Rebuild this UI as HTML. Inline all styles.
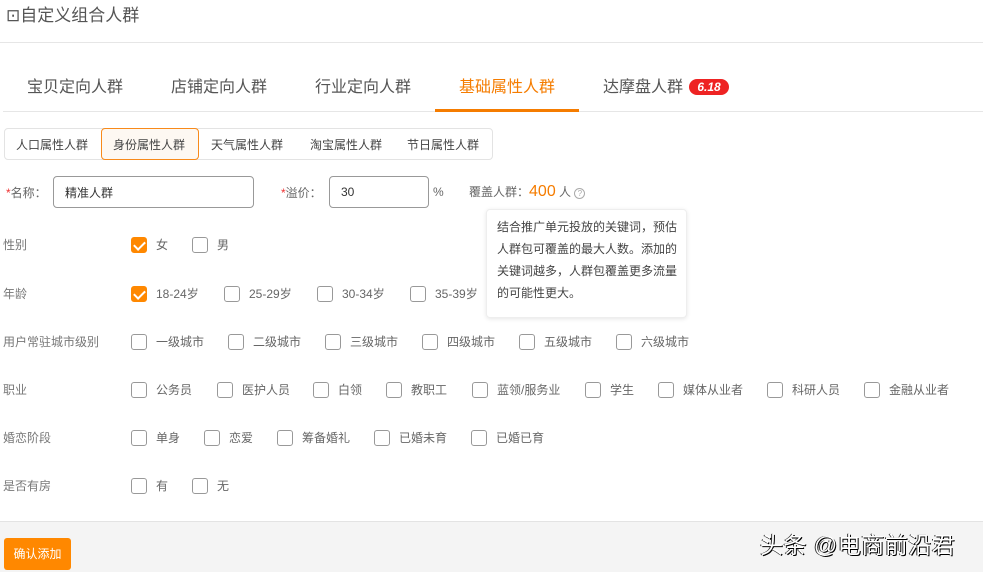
<!DOCTYPE html><html><head><meta charset="utf-8"><style>
*{margin:0;padding:0;box-sizing:border-box}
body{width:983px;height:572px;position:relative;overflow:hidden;background:#fff;font-family:"Liberation Sans","Noto Sans CJK SC",sans-serif;color:#666}
.a{position:absolute;white-space:nowrap}
.t{font-size:16px;color:#555;top:73px}
.s{font-size:12px;color:#444;top:136px}
.lb{font-size:12px;color:#777;left:3px}
.cb{position:absolute;width:16px;height:16px;border:1px solid #999;border-radius:3px;background:#fff}
.ck{background:#f80;border-color:#f80}
.ck::after{content:"";position:absolute;left:4px;top:1px;width:5px;height:9px;border:solid #fff;border-width:0 2px 2px 0;transform:rotate(45deg)}
.ct{font-size:12px;color:#666}
</style></head><body>
<div class="a" style="left:6px;top:1px;font-size:17px;color:#555">⊡自定义组合人群</div>
<div class="a" style="left:0;top:42px;width:983px;height:1px;background:#e6e6e6"></div>
<div class="a t" style="left:27px">宝贝定向人群</div>
<div class="a t" style="left:171px">店铺定向人群</div>
<div class="a t" style="left:315px">行业定向人群</div>
<div class="a t" style="left:459px;color:#f57c00">基础属性人群</div>
<div class="a t" style="left:603px">达摩盘人群</div>
<div class="a" style="left:689px;top:79px;width:40px;height:16px;border-radius:8px;background:#ee2323;color:#fff;font-size:12px;font-weight:bold;font-style:italic;text-align:center;line-height:16px">6.18</div>
<div class="a" style="left:3px;top:111px;width:980px;height:1px;background:#e6e6e6"></div>
<div class="a" style="left:435px;top:109px;width:144px;height:3px;background:#f57c00"></div>
<div class="a" style="left:4px;top:128px;width:489px;height:32px;border:1px solid #e3e3e3;border-radius:4px"></div>
<div class="a" style="left:101px;top:128px;width:98px;height:32px;border:1px solid #f88a1a;border-radius:4px;background:#fdf8f2"></div>
<div class="a s" style="left:16px">人口属性人群</div>
<div class="a s" style="left:113px">身份属性人群</div>
<div class="a s" style="left:211px">天气属性人群</div>
<div class="a s" style="left:310px">淘宝属性人群</div>
<div class="a s" style="left:407px">节日属性人群</div>
<div class="a" style="left:6px;top:184px;font-size:12px;color:#666"><span style="color:#e33">*</span>名称：</div>
<div class="a" style="left:53px;top:176px;width:201px;height:32px;border:1px solid #999;border-radius:4px;font-size:12px;color:#333;padding:7px 11px">精准人群</div>
<div class="a" style="left:281px;top:184px;font-size:12px;color:#666"><span style="color:#e33">*</span>溢价：</div>
<div class="a" style="left:329px;top:176px;width:100px;height:32px;border:1px solid #999;border-radius:4px;font-size:12px;color:#333;padding:8px 11px">30</div>
<div class="a" style="left:433px;top:185px;font-size:12px">%</div>
<div class="a" style="left:469px;top:183px;font-size:12px">覆盖人群：<span style="color:#f57c00;font-size:16px">400</span> 人 <span style="display:inline-block;width:11px;height:11px;border:1px solid #aaa;border-radius:50%;font-size:8px;text-align:center;line-height:10px;color:#aaa">?</span></div>
<div class="a" style="left:486px;top:209px;width:201px;height:109px;border:1px solid #eee;border-radius:4px;box-shadow:0 1px 4px rgba(0,0,0,.1);background:#fff;font-size:12px;color:#444;line-height:22px;padding:6px 0 0 10px;white-space:normal;word-break:break-all">结合推广单元投放的关键词，预估人群包可覆盖的最大人数。添加的关键词越多，人群包覆盖更多流量的可能性更大。</div>

<div class="a lb" style="top:236px">性别</div>
<div class="a lb" style="top:285px">年龄</div>
<div class="a lb" style="top:333px">用户常驻城市级别</div>
<div class="a lb" style="top:381px">职业</div>
<div class="a lb" style="top:429px">婚恋阶段</div>
<div class="a lb" style="top:477px">是否有房</div>

<div class="cb ck" style="left:131px;top:237px"></div><div class="a ct" style="left:156px;top:236px">女</div>
<div class="cb" style="left:192px;top:237px"></div><div class="a ct" style="left:217px;top:236px">男</div>

<div class="cb ck" style="left:131px;top:286px"></div><div class="a ct" style="left:156px;top:285px">18-24岁</div>
<div class="cb" style="left:224px;top:286px"></div><div class="a ct" style="left:249px;top:285px">25-29岁</div>
<div class="cb" style="left:317px;top:286px"></div><div class="a ct" style="left:342px;top:285px">30-34岁</div>
<div class="cb" style="left:410px;top:286px"></div><div class="a ct" style="left:435px;top:285px">35-39岁</div>

<div class="cb" style="left:131px;top:334px"></div><div class="a ct" style="left:156px;top:333px">一级城市</div>
<div class="cb" style="left:228px;top:334px"></div><div class="a ct" style="left:253px;top:333px">二级城市</div>
<div class="cb" style="left:325px;top:334px"></div><div class="a ct" style="left:350px;top:333px">三级城市</div>
<div class="cb" style="left:422px;top:334px"></div><div class="a ct" style="left:447px;top:333px">四级城市</div>
<div class="cb" style="left:519px;top:334px"></div><div class="a ct" style="left:544px;top:333px">五级城市</div>
<div class="cb" style="left:616px;top:334px"></div><div class="a ct" style="left:641px;top:333px">六级城市</div>

<div class="cb" style="left:131px;top:382px"></div><div class="a ct" style="left:156px;top:381px">公务员</div>
<div class="cb" style="left:217px;top:382px"></div><div class="a ct" style="left:242px;top:381px">医护人员</div>
<div class="cb" style="left:313px;top:382px"></div><div class="a ct" style="left:338px;top:381px">白领</div>
<div class="cb" style="left:386px;top:382px"></div><div class="a ct" style="left:411px;top:381px">教职工</div>
<div class="cb" style="left:472px;top:382px"></div><div class="a ct" style="left:497px;top:381px">蓝领/服务业</div>
<div class="cb" style="left:585px;top:382px"></div><div class="a ct" style="left:610px;top:381px">学生</div>
<div class="cb" style="left:658px;top:382px"></div><div class="a ct" style="left:683px;top:381px">媒体从业者</div>
<div class="cb" style="left:767px;top:382px"></div><div class="a ct" style="left:792px;top:381px">科研人员</div>
<div class="cb" style="left:864px;top:382px"></div><div class="a ct" style="left:889px;top:381px">金融从业者</div>

<div class="cb" style="left:131px;top:430px"></div><div class="a ct" style="left:156px;top:429px">单身</div>
<div class="cb" style="left:204px;top:430px"></div><div class="a ct" style="left:229px;top:429px">恋爱</div>
<div class="cb" style="left:277px;top:430px"></div><div class="a ct" style="left:302px;top:429px">筹备婚礼</div>
<div class="cb" style="left:374px;top:430px"></div><div class="a ct" style="left:399px;top:429px">已婚未育</div>
<div class="cb" style="left:471px;top:430px"></div><div class="a ct" style="left:496px;top:429px">已婚已育</div>

<div class="cb" style="left:131px;top:478px"></div><div class="a ct" style="left:156px;top:477px">有</div>
<div class="cb" style="left:192px;top:478px"></div><div class="a ct" style="left:217px;top:477px">无</div>

<div class="a" style="left:0;top:521px;width:983px;height:51px;background:#f4f4f4;border-top:1px solid #e3e3e3"></div>
<div class="a" style="left:4px;top:538px;width:67px;height:32px;background:#f80;border-radius:3px;color:#fff;font-size:12px;text-align:center;line-height:32px">确认添加</div>
<div class="a" style="left:760px;top:526px;font-size:23px;letter-spacing:0.5px;color:#fff;text-shadow:1px 1px 0 #000,-1px 0 0 #333">头条 @电商前沿君</div>
</body></html>
